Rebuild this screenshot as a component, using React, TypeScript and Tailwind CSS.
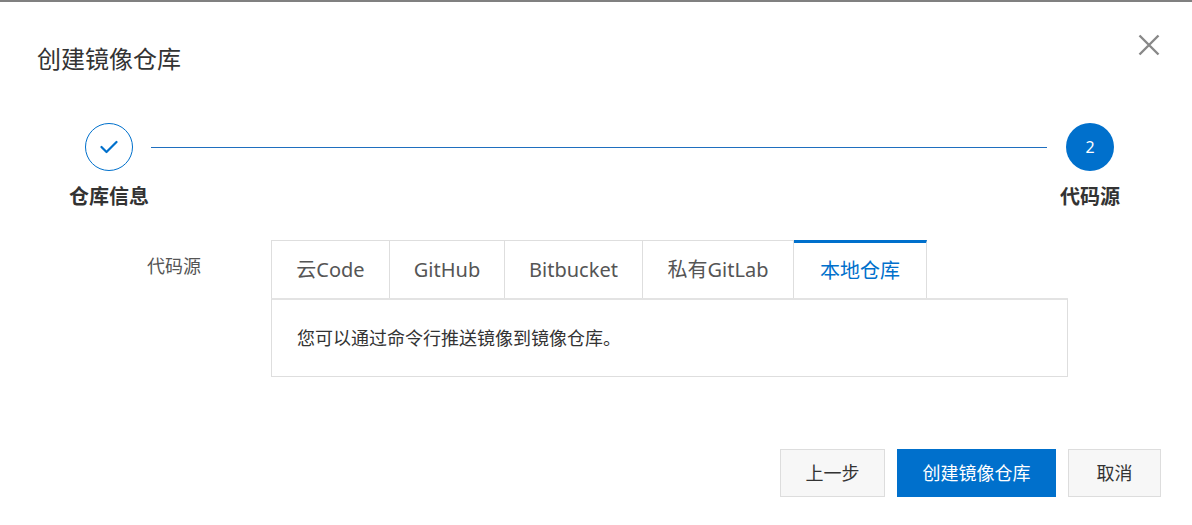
import { useState } from "react";

const tabs = [
  { label: "云Code", w: "w-[119px]" },
  { label: "GitHub", w: "w-[115px]" },
  { label: "Bitbucket", w: "w-[138px]" },
  { label: "私有GitLab", w: "w-[151px]" },
  { label: "本地仓库", w: "w-[133px]" },
];

function Step({ label, width, done, num }: { label: string; width: string; done?: boolean; num?: string }) {
  return (
    <div className={`flex flex-col items-center ${width}`}>
      {done ? (
        <div className="w-12 h-12 rounded-full border border-[#0070cc] flex items-center justify-center">
          <svg width="18" height="14" viewBox="0 0 18 14" fill="none">
            <path d="M1.5 7 L6.5 12 L16.5 2" stroke="#0070cc" strokeWidth="2.2" strokeLinecap="round" strokeLinejoin="round" />
          </svg>
        </div>
      ) : (
        <div className="w-12 h-12 rounded-full bg-[#0070cc] text-white text-[16px] flex items-center justify-center">
          {num}
        </div>
      )}
      <div className="mt-3 h-7 leading-7 text-[20px] font-bold text-[#333] whitespace-nowrap">{label}</div>
    </div>
  );
}

export default function App() {
  const [active, setActive] = useState(4);

  return (
    <div
      className="w-[1192px] h-[525px] bg-white relative overflow-hidden"
      style={{ fontFamily: '"Noto Sans", "Noto Sans CJK SC", sans-serif' }}
    >
      {/* page behind the dialog */}
      <div className="h-[2px] bg-[#808080]" />

      {/* Header */}
      <div className="pt-[41px] pl-[37px] h-[75px]">
        <h2 className="h-8 leading-8 text-[24px] text-[#333]">创建镜像仓库</h2>
      </div>
      <button className="absolute top-[34px] right-[32px] w-[22px] h-[22px]" aria-label="close">
        <svg width="22" height="22" viewBox="0 0 22 22" fill="none">
          <path d="M1.5 1.5 L20.5 20.5 M20.5 1.5 L1.5 20.5" stroke="#888" strokeWidth="2.4" />
        </svg>
      </button>

      {/* Steps */}
      <div className="mt-[46px] flex items-start pl-[67px] pr-[71px]">
        <Step label="仓库信息" width="w-[84px]" done />
        <div className="flex-1 h-px bg-[#1f6fbf] mt-6 mr-[12px]" />
        <Step label="代码源" width="w-[62px]" num="2" />
      </div>

      {/* Code source */}
      <div className="mt-[29px] flex pl-[147px]">
        <div className="w-[124px] pt-[14px] h-6 leading-6 text-[18px] text-[#555] box-content">代码源</div>
        <div className="w-[797px]">
          <div className="flex">
            {tabs.map((t, i) => (
              <button
                key={t.label}
                onClick={() => setActive(i)}
                className={`${t.w} h-[58px] flex items-center justify-center text-[20px] border-r border-[#dedede] bg-white ${
                  i === 0 ? "border-l" : ""
                } ${i === active ? "border-t-[3px] border-t-[#0070cc] text-[#0070cc]" : "border-t text-[#555]"}`}
              >
                {t.label}
              </button>
            ))}
          </div>
          <div className="h-[79px] border border-[#dedede] border-t-2 border-t-[#e3e3e3] flex items-center pl-[25px] text-[18px] text-[#333]">
            您可以通过命令行推送镜像到镜像仓库。
          </div>
        </div>
      </div>

      {/* Footer */}
      <div className="mt-[72px] flex justify-end gap-3 pr-[31px]">
        <button className="w-[105px] h-12 bg-[#f7f7f7] border border-[#dddddd] text-[18px] text-[#333]">上一步</button>
        <button className="w-[159px] h-12 bg-[#0070cc] text-[18px] text-white">创建镜像仓库</button>
        <button className="w-[93px] h-12 bg-[#f7f7f7] border border-[#dddddd] text-[18px] text-[#333]">取消</button>
      </div>
    </div>
  );
}
